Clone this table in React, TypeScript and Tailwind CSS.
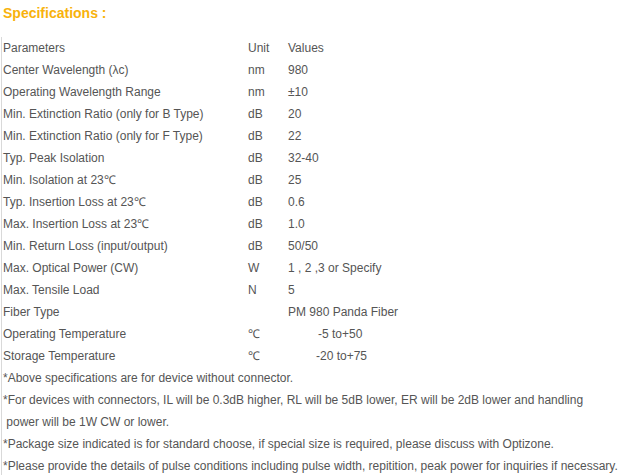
const rows: [string, string, string][] = [
  ["Parameters", "Unit", "Values"],
  ["Center Wavelength (\u03bbc)", "nm", "980"],
  ["Operating Wavelength Range", "nm", "\u00b110"],
  ["Min. Extinction Ratio (only for B Type)", "dB", "20"],
  ["Min. Extinction Ratio (only for F Type)", "dB", "22"],
  ["Typ. Peak Isolation", "dB", "32-40"],
  ["Min. Isolation at 23\u2103", "dB", "25"],
  ["Typ. Insertion Loss at 23\u2103", "dB", "0.6"],
  ["Max. Insertion Loss at 23\u2103", "dB", "1.0"],
  ["Min. Return Loss (input/output)", "dB", "50/50"],
  ["Max. Optical Power (CW)", "W", "1 , 2 ,3 or Specify"],
  ["Max. Tensile Load", "N", "5"],
  ["Fiber Type", "", "PM 980 Panda Fiber"],
];

const notes = [
  "*Above specifications are for device without connector.",
  "*For devices with connectors, IL will be 0.3dB higher, RL will be 5dB lower, ER will be 2dB lower and handling",
  "\u00a0power will be 1W CW or lower.",
  "*Package size indicated is for standard choose, if special size is required, please discuss with Optizone.",
  "*Please provide the details of pulse conditions including pulse width, repitition, peak power for inquiries if necessary.",
];

export default function App() {
  return (
    <div className="w-[638px] h-[475px] bg-white overflow-hidden font-['Liberation_Sans',Arial,sans-serif] text-[12px] text-[#555]">
      <div className="pl-[3px] pt-[4px] h-[37px] text-[14px] font-bold text-[#f8b20c] leading-[18px]">
        Specifications :
      </div>
      <div className="ml-[1px] border-l border-[#d9d9d9] pl-[1px] leading-[22px]">
        {rows.map(([p, u, v]) => (
          <div key={p} className="flex h-[22px]">
            <div className="w-[245px] shrink-0">{p}</div>
            <div className="w-[40px] shrink-0">{u}</div>
            <div>{v}</div>
          </div>
        ))}
        <div className="flex h-[22px]">
          <div className="w-[245px] shrink-0">Operating Temperature</div>
          <div className="w-[40px] shrink-0">&#8451;</div>
          <div className="pl-[30px]">-5 to+50</div>
        </div>
        <div className="flex h-[22px]">
          <div className="w-[245px] shrink-0">Storage Temperature</div>
          <div className="w-[40px] shrink-0">&#8451;</div>
          <div className="pl-[28px]">-20 to+75</div>
        </div>
        {notes.map((n) => (
          <div key={n} className="h-[22px] whitespace-nowrap">
            {n}
          </div>
        ))}
      </div>
    </div>
  );
}
